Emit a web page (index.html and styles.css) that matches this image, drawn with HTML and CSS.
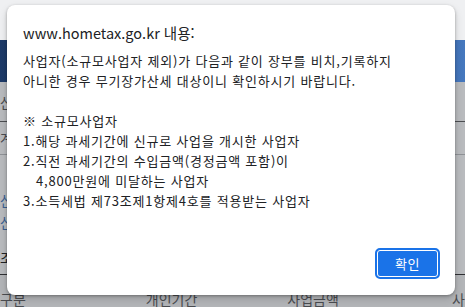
FILE: index.html
```html
<!DOCTYPE html>
<html lang="ko">
<head>
  <meta charset="UTF-8" />
  <title>www.hometax.go.kr 내용</title>
  <link rel="stylesheet" href="styles.css">
</head>
<body>
  <!-- Page behind the alert (dimmed) -->
  <div class="page">
    <div class="top-strip"></div>
    <div class="nav-band"></div>
    <div class="dim-area">
      <div class="row row-top"><span class="cell">산</span></div>
      <div class="row row-a"><span class="cell">계</span></div>
      <div class="row row-b"></div>
      <div class="row row-c">
        <span class="cell link">산</span>
        <span class="cell link">산</span>
      </div>
      <div class="row row-d"><span class="cell strong">조</span></div>
      <div class="row row-e">
        <span class="cell">구분</span>
        <span class="cell mid">개인기간</span>
        <span class="cell mid2">사업금액</span>
        <span class="cell end">사</span>
      </div>
    </div>
  </div>

  <!-- Alert dialog -->
  <div class="alert">
    <div class="alert-title">www.hometax.go.kr 내용:</div>
    <div class="alert-body">
      <p>사업자(소규모사업자 제외)가 다음과 같이 장부를 비치,기록하지</p>
      <p>아니한 경우 무기장가산세 대상이니 확인하시기 바랍니다.</p>
      <p>&nbsp;</p>
      <p>※ 소규모사업자</p>
      <p>1.해당 과세기간에 신규로 사업을 개시한 사업자</p>
      <p>2.직전 과세기간의 수입금액(경정금액 포함)이</p>
      <p class="indent">4,800만원에 미달하는 사업자</p>
      <p>3.소득세법 제73조제1항제4호를 적용받는 사업자</p>
    </div>
    <div class="alert-actions">
      <button class="ok-btn" type="button">확인</button>
    </div>
  </div>
</body>
</html>
```

FILE: styles.css
```css
* {
  box-sizing: border-box;
  margin: 0;
  padding: 0;
}

body {
  width: 465px;
  height: 307px;
  overflow: hidden;
  font-family: 'Noto Sans CJK KR', 'Noto Sans', sans-serif;
  position: relative;
  background-color: #b9bbbe;
}

/* Background page */
.page {
  display: flex;
  flex-direction: column;
  height: 307px;
}

.top-strip {
  height: 40px;
  background-color: #eff0f2;
}

.nav-band {
  height: 42px;
  background: linear-gradient(90deg, #1d3a68 0%, #2f5896 50%, #4678be 100%);
}

.dim-area {
  flex: 1;
  display: flex;
  flex-direction: column;
  background-color: #b9bbbe;
  color: #4a4c50;
  font-size: 14px;
}

.row {
  display: flex;
  align-items: center;
}

.row-top {
  height: 40px;
  border-bottom: 1px solid #4c4e52;
}

.row-a {
  height: 33px;
  border-bottom: 1px solid #8f9296;
}

.row-b {
  height: 28px;
}

.row-c {
  height: 56px;
  flex-direction: column;
  align-items: flex-start;
  justify-content: center;
  gap: 6px;
}

.row-d {
  height: 36px;
  border-bottom: 1px solid #2f3033;
}

.row-e {
  flex: 1;
  background-color: #b3b5b8;
  align-items: flex-end;
}

.cell {
  line-height: 16px;
}

.link {
  color: #3a5f92;
}

.strong {
  color: #202226;
}

.mid {
  margin-left: 120px;
}

.mid2 {
  margin-left: 90px;
}

.end {
  margin-left: auto;
}

/* Alert dialog */
.alert {
  position: absolute;
  left: 7px;
  top: 5px;
  width: 448px;
  height: 290px;
  background-color: #fff;
  border-radius: 8px;
  box-shadow: 0 1px 3px rgba(0, 0, 0, 0.3), 0 4px 8px rgba(0, 0, 0, 0.15);
  padding: 18px 15px 16px 16px;
  display: flex;
  flex-direction: column;
  color: #202124;
}

.alert-title {
  font-size: 14.5px;
  line-height: 20px;
  margin-bottom: 8px;
}

.alert-body {
  font-size: 13px;
  line-height: 20px;
  letter-spacing: 0.8px;
  flex: 1;
}

.alert-body .indent {
  padding-left: 13px;
}

.alert-actions {
  display: flex;
  justify-content: flex-end;
}

.ok-btn {
  width: 65px;
  height: 31px;
  background-color: #1a73e8;
  color: #fff;
  border: 2px solid #1a73e8;
  border-radius: 5px;
  box-shadow: inset 0 0 0 1px #fff;
  font-family: inherit;
  font-size: 13px;
  letter-spacing: 0.5px;
  cursor: pointer;
}
```
